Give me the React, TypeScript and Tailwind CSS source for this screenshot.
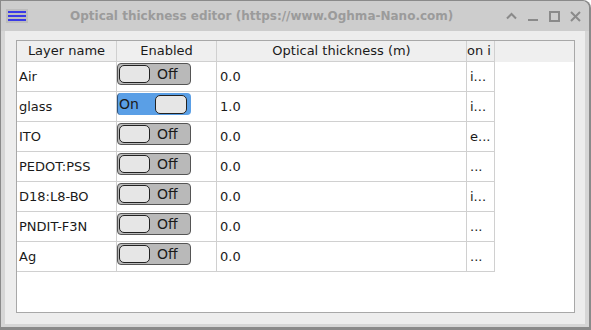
const ROWS = [
  { name: 'Air', on: false, thickness: '0.0', extra: 'i...' },
  { name: 'glass', on: true, thickness: '1.0', extra: 'i...' },
  { name: 'ITO', on: false, thickness: '0.0', extra: 'e...' },
  { name: 'PEDOT:PSS', on: false, thickness: '0.0', extra: '...' },
  { name: 'D18:L8-BO', on: false, thickness: '0.0', extra: 'i...' },
  { name: 'PNDIT-F3N', on: false, thickness: '0.0', extra: '...' },
  { name: 'Ag', on: false, thickness: '0.0', extra: '...' },
]

function Toggle({ on }: { on: boolean }) {
  if (on) {
    return (
      <div className="relative w-[74px] h-[22px] rounded-[4px] bg-[#5a9fe6] border-l border-[#2b4f77] flex items-center">
        <span className="pl-[1px] text-[14px] leading-none text-[#1a1a1a]">On</span>
        <div className="absolute left-[37px] top-[2px] w-[32px] h-[19px] rounded-[5px] bg-[#e6e6e6] border border-[#222]" />
      </div>
    )
  }
  return (
    <div className="relative w-[74px] h-[22px] rounded-[4px] bg-[#b9b9b9] border border-[#555] flex items-center">
      <div className="ml-[1px] w-[31px] h-[18px] rounded-[5px] bg-[#e6e6e6] border border-[#222]" />
      <span className="ml-[7px] text-[14px] leading-none text-[#1a1a1a]">Off</span>
    </div>
  )
}

export default function App() {
  return (
    <div
      className="w-[591px] h-[330px] bg-[#8a8a8a] p-[1px] pr-[2px] pb-[3px] rounded-tr-[8px] overflow-hidden"
      style={{ fontFamily: '"DejaVu Sans", "Noto Sans", sans-serif' }}
    >
      <div className="w-full h-full bg-[#d6d6d6] rounded-tr-[7px] flex flex-col">
        {/* title bar */}
        <div className="h-[30px] bg-[#cdcdcd] rounded-tr-[7px] flex items-center">
          <div className="ml-[5px] w-[22px] h-[14px] bg-[#bdbdbd] flex flex-col justify-center gap-[2px] px-[2px]">
            <div className="h-[2px] bg-[#3a3ae6]" />
            <div className="h-[2px] bg-[#3a3ae6]" />
            <div className="h-[2px] bg-[#3a3ae6]" />
          </div>
          <div className="ml-[42px] text-[12px] font-bold text-[#9b9b9b] whitespace-nowrap">
            Optical thickness editor (https://www.Oghma-Nano.com)
          </div>
          <div className="flex-1" />
          <div className="flex items-center gap-[10px] mr-[8px]">
            <svg width="11" height="8" viewBox="0 0 11 8">
              <path d="M1 6.5 L5.5 2 L10 6.5" stroke="#8a8a8a" strokeWidth="2" fill="none" />
            </svg>
            <svg width="12" height="12" viewBox="0 0 12 12">
              <rect x="1" y="9" width="10" height="2" fill="#8a8a8a" />
            </svg>
            <svg width="11" height="11" viewBox="0 0 11 11">
              <rect x="1" y="1" width="9" height="9" stroke="#8a8a8a" strokeWidth="2" fill="none" />
            </svg>
            <svg width="11" height="11" viewBox="0 0 11 11">
              <path d="M1 1 L10 10 M10 1 L1 10" stroke="#8a8a8a" strokeWidth="2" />
            </svg>
          </div>
        </div>

        {/* client area */}
        <div className="flex-1 mx-[4px] mb-[3px] bg-[#ededed] pt-[9px] pl-[11px] pr-[11px] pb-[10px]">
          <div className="w-[559px] h-[273px] border border-[#a8a8a8] bg-white text-[13px] text-[#1a1a1a]">
            <div className="flex h-[21px] bg-[#efefef]">
              <div className="w-[100px] border-r border-b border-[#d0d0d0] flex items-center justify-center">Layer name</div>
              <div className="w-[100px] border-r border-b border-[#d0d0d0] flex items-center justify-center">Enabled</div>
              <div className="w-[250px] border-r border-b border-[#d0d0d0] flex items-center justify-center">Optical thickness (m)</div>
              <div className="w-[28px] border-r border-b border-[#d0d0d0] flex items-center overflow-hidden whitespace-nowrap">on i</div>
              <div className="flex-1" />
            </div>
            {ROWS.map((r) => (
              <div key={r.name} className="flex h-[30px]">
                <div className="w-[100px] border-r border-b border-[#d0d0d0] flex items-center pl-[2px]">{r.name}</div>
                <div className="w-[100px] border-r border-b border-[#d0d0d0] pt-[1px]">
                  <Toggle on={r.on} />
                </div>
                <div className="w-[250px] border-r border-b border-[#d0d0d0] flex items-center pl-[3px]">{r.thickness}</div>
                <div className="w-[28px] border-r border-b border-[#d0d0d0] flex items-center pl-[3px] overflow-hidden whitespace-nowrap">{r.extra}</div>
              </div>
            ))}
          </div>
        </div>
      </div>
    </div>
  )
}
